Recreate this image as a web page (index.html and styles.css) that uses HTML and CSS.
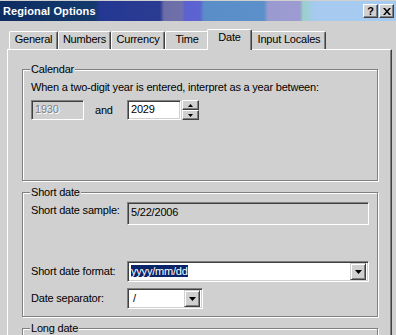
FILE: index.html
```html
<!DOCTYPE html>
<html lang="en">
<head>
    <meta charset="UTF-8">
    <title>Regional Options</title>
    <link rel="stylesheet" href="styles.css">
</head>
<body>
    <div class="window">
        <div class="titlebar">
            <span class="title">Regional Options</span>
            <div class="caption-buttons">
                <span class="cap-btn help">?</span>
                <span class="cap-btn close">
                    <svg width="8" height="7" viewBox="0 0 8 7"><path d="M0 0h2l2 2.5L6 0h2L5 3.5 8 7H6L4 4.5 2 7H0l3-3.5z" fill="#000"/></svg>
                </span>
            </div>
        </div>

        <div class="client">
            <ul class="tabs">
                <li class="tab tab-general">General</li>
                <li class="tab tab-numbers">Numbers</li>
                <li class="tab tab-currency">Currency</li>
                <li class="tab tab-time">Time</li>
                <li class="tab tab-date active">Date</li>
                <li class="tab tab-locales">Input Locales</li>
            </ul>

            <div class="panel">
                <fieldset class="group calendar">
                    <legend>Calendar</legend>
                    <p class="note">When a two-digit year is entered, interpret as a year between:</p>
                    <div class="year-row">
                        <span class="edit year disabled">1930</span>
                        <span class="and">and</span>
                        <span class="edit year">2029</span>
                        <span class="spin">
                            <span class="spin-btn"><svg width="5" height="3" viewBox="0 0 5 3"><path d="M2.5 0L5 3H0z" fill="#000"/></svg></span>
                            <span class="spin-btn"><svg width="5" height="3" viewBox="0 0 5 3"><path d="M0 0h5L2.5 3z" fill="#000"/></svg></span>
                        </span>
                    </div>
                </fieldset>

                <fieldset class="group short-date">
                    <legend>Short date</legend>
                    <div class="row sample-row">
                        <label>Short date sample:</label>
                        <span class="static">5/22/2006</span>
                    </div>
                    <div class="row format-row">
                        <label>Short date format:</label>
                        <div class="combo wide">
                            <span class="combo-text"><span class="selected">yyyy/mm/dd</span></span>
                            <span class="drop"><svg width="7" height="4" viewBox="0 0 7 4"><path d="M0 0h7L3.5 4z" fill="#000"/></svg></span>
                        </div>
                    </div>
                    <div class="row sep-row">
                        <label>Date separator:</label>
                        <div class="combo narrow">
                            <span class="combo-text">/</span>
                            <span class="drop"><svg width="7" height="4" viewBox="0 0 7 4"><path d="M0 0h7L3.5 4z" fill="#000"/></svg></span>
                        </div>
                    </div>
                </fieldset>

                <fieldset class="group long-date">
                    <legend>Long date</legend>
                </fieldset>
            </div>
        </div>
    </div>
</body>
</html>
```

FILE: styles.css
```css
body {
    margin: 0;
    background-color: #d0d0d0;
    font-family: "Liberation Sans", Arial, sans-serif;
    font-size: 11px;
    line-height: 13px;
    letter-spacing: -0.2px;
    color: #000;
    overflow: hidden;
}
.window {
    padding-top: 1px;
}
.titlebar {
    height: 20px;
    display: flex;
    align-items: center;
    justify-content: space-between;
    padding: 0 2px 0 3px;
    background: linear-gradient(90deg, #0d2c62 0, #143a6e 95px, #243892 100px, #2b3b92 160px, #6c6ca6 164px, #7070ac 182px, #5c62d0 185px, #5c64d0 200px, #5a8ec8 204px, #5c90ca 264px, #9a9ad0 268px, #9c9cd2 300px, #98d0c8 303px, #a2cce4 311px, #a6caf0 315px, #a6caf0 100%);
}
.title {
    color: white;
    font-weight: bold;
    letter-spacing: 0.1px;
}
.caption-buttons {
    display: flex;
    gap: 1px;
}
.cap-btn {
    width: 15px;
    height: 14px;
    box-sizing: border-box;
    display: flex;
    align-items: center;
    justify-content: center;
    background-color: #d0d0d0;
    border: 1px solid;
    border-color: #fff #404040 #404040 #fff;
    box-shadow: inset -1px -1px 0 #808080;
    font-weight: bold;
    font-size: 11px;
    letter-spacing: 0;
}
.client {
    padding: 8px 0 0 7px;
}

/* tab strip */
.tabs {
    display: flex;
    align-items: flex-end;
    height: 20px;
    margin: 0;
    padding: 0 0 0 2px;
    list-style: none;
}
.tab {
    height: 18px;
    box-sizing: border-box;
    padding: 1px 0 0;
    text-align: center;
    border-top: 1px solid #fff;
    border-left: 1px solid #fff;
    border-right: 1px solid #404040;
    border-radius: 2px 2px 0 0;
    box-shadow: inset -1px 0 0 #808080;
}
.tab-general { width: 49px; }
.tab-numbers { width: 53px; }
.tab-currency { width: 54px; }
.tab-time { width: 44px; }
.tab-date { width: 45px; }
.tab-locales { width: 76px; padding-left: 2px; }
.tab.active {
    height: 21px;
    margin: 0 -2px -1px;
    position: relative;
    z-index: 1;
    background-color: #d0d0d0;
}
.panel {
    width: 385px;
    height: 300px;
    box-sizing: border-box;
    padding: 13px 0 0 14px;
    border: 1px solid;
    border-color: #fff #404040 #404040 #fff;
    box-shadow: inset -1px 0 0 #808080;
}

/* group boxes */
.group {
    width: 356px;
    box-sizing: border-box;
    margin: 0 0 5px;
    padding: 0 8px;
    border: 1px solid #808080;
    box-shadow: 1px 1px 0 #fff, inset 1px 1px 0 #fff;
    min-inline-size: auto;
}
.group legend {
    padding: 0 1px;
    margin-left: -1px;
    background-color: #d0d0d0;
}
.calendar {
    padding-top: 5px;
    padding-bottom: 60px;
}
.short-date {
    padding-top: 3px;
    padding-bottom: 7px;
}
.note {
    margin: 0;
}
.year-row {
    display: flex;
    align-items: center;
    height: 20px;
    margin-top: 6px;
}

/* sunken edit */
.edit,
.static,
.combo {
    box-sizing: border-box;
    border: 1px solid;
    border-color: #808080 #fff #fff #808080;
    box-shadow: inset 1px 1px 0 #404040, inset -1px -1px 0 #d0d0d0;
}
.edit {
    height: 20px;
    padding: 2px 3px 0;
    background-color: #fff;
}
.year {
    width: 54px;
}
.year.disabled {
    width: 53px;
    background-color: #d0d0d0;
    color: #808080;
    text-shadow: 1px 1px 0 #fff;
}
.and {
    width: 32px;
    margin-left: 11px;
}
.spin {
    display: flex;
    flex-direction: column;
    width: 17px;
    height: 20px;
    margin-left: 1px;
}
.spin-btn {
    flex: 1;
    display: flex;
    align-items: center;
    justify-content: center;
    box-sizing: border-box;
    border: 1px solid;
    border-color: #fff #404040 #404040 #fff;
    box-shadow: inset -1px -1px 0 #808080;
}
.row {
    display: flex;
    align-items: center;
}
.row label {
    width: 96px;
    flex: none;
}
.sample-row {
    align-items: flex-start;
}
.sample-row label {
    padding-top: 2px;
}
.static {
    width: 242px;
    height: 23px;
    padding: 3px 3px 0;
}
.format-row {
    margin-top: 36px;
}
.sep-row {
    margin-top: 6px;
}
.combo {
    display: flex;
    align-items: center;
    height: 21px;
    padding: 2px;
    background-color: #fff;
}
.combo.wide {
    width: 243px;
}
.combo.narrow {
    width: 76px;
}
.combo-text {
    flex: 1;
    padding-left: 1px;
}
.combo.narrow .combo-text {
    padding-left: 3px;
}
.selected {
    background-color: #0a246a;
    color: white;
}
.drop {
    width: 16px;
    height: 17px;
    box-sizing: border-box;
    display: flex;
    align-items: center;
    justify-content: center;
    background-color: #d0d0d0;
    border: 1px solid;
    border-color: #d0d0d0 #404040 #404040 #d0d0d0;
    box-shadow: inset 1px 1px 0 #fff, inset -1px -1px 0 #808080;
}
.long-date {
    height: 60px;
}
```
